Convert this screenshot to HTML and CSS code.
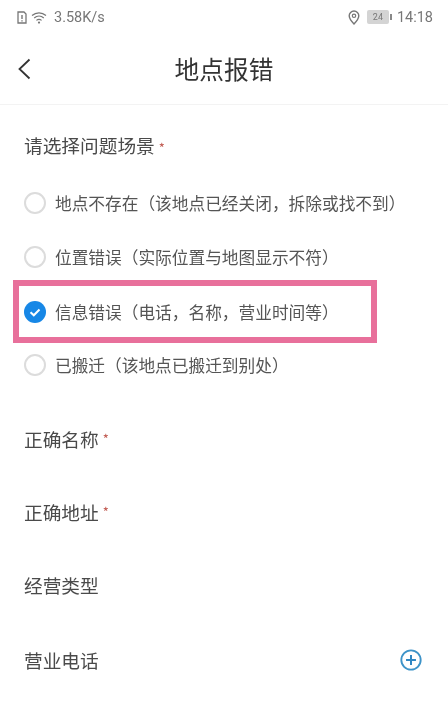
FILE: index.html
```html
<!DOCTYPE html>
<html lang="zh-CN">
<head>
<meta charset="utf-8">
<title>地点报错</title>
<link rel="stylesheet" href="styles.css">
</head>
<body>
<div class="screen">
  <div class="status">
    <div class="status-side">
      <svg class="sim" viewBox="0 0 10 13" width="10" height="13"><path d="M1 1h6l2 2v9H1z" fill="none" stroke="#777" stroke-width="1.300"/><path d="M5 4v4M5 9.300v1.200" stroke="#777" stroke-width="1.400"/></svg>
      <svg class="wifi" viewBox="0 0 16 13" width="16" height="13"><path d="M1 4.500c4-3.600 10-3.600 14 0M3.200 7c2.800-2.400 6.800-2.400 9.600 0M5.400 9.400c1.500-1.200 3.700-1.200 5.200 0" fill="none" stroke="#777" stroke-width="1.200"/><circle cx="8" cy="11.600" r="1.100" fill="#777"/></svg>
      <span class="speed">3.58K/s</span>
    </div>
    <div class="status-side">
      <svg class="pin" viewBox="0 0 12 15" width="12" height="15"><path d="M6 1a4.800 4.800 0 0 0-4.800 4.800C1.200 9 6 14 6 14s4.800-5 4.800-8.200A4.800 4.800 0 0 0 6 1z" fill="none" stroke="#777" stroke-width="1.400"/><circle cx="6" cy="5.800" r="1.700" fill="none" stroke="#777" stroke-width="1.200"/></svg>
      <div class="battery"><span class="battery-body">24</span><span class="battery-tip"></span></div>
      <span class="clock">14:18</span>
    </div>
  </div>
  <header class="nav">
    <svg class="back" viewBox="0 0 14 22" width="14" height="22"><path d="M12.500 1.500 2.500 11 12.500 20.500" fill="none" stroke="#333" stroke-width="1.800"/></svg>
    <h1 class="title">地点报错</h1>
  </header>
  <main class="form">
    <div class="question">请选择问题场景<span class="star">*</span></div>
    <div class="options">
      <div class="option"><span class="radio"></span><span>地点不存在（该地点已经关闭，拆除或找不到）</span></div>
      <div class="option"><span class="radio"></span><span>位置错误（实际位置与地图显示不符）</span></div>
      <div class="option selected">
        <svg class="check" viewBox="0 0 22 22" width="22" height="22"><circle cx="11" cy="11" r="11" fill="#1787e6"/><path d="M6.500 11.200 9.800 14.300 15.500 8.500" fill="none" stroke="#fff" stroke-width="2"/></svg>
        <span>信息错误（电话，名称，营业时间等）</span>
      </div>
      <div class="option"><span class="radio"></span><span>已搬迁（该地点已搬迁到别处）</span></div>
    </div>
    <div class="field first">正确名称<span class="star">*</span></div>
    <div class="field">正确地址<span class="star">*</span></div>
    <div class="field">经营类型</div>
    <div class="field phone">
      <span>营业电话</span>
      <svg class="plus" viewBox="0 0 20 20" width="22" height="22"><circle cx="10" cy="10" r="8.800" fill="none" stroke="#3d93c8" stroke-width="1.700"/><path d="M10 5.500v9M5.500 10h9" stroke="#2f86c2" stroke-width="1.800"/></svg>
    </div>
  </main>
</div>
</body>
</html>
```
FILE: styles.css
```css
html, body { margin: 0; padding: 0; background: #fff; }
.screen {
  width: 448px;
  height: 720px;
  overflow: hidden;
  display: flex;
  flex-direction: column;
  font-family: "Noto Sans CJK SC", "Liberation Sans", sans-serif;
  color: #4a4a4a;
  filter: blur(0.45px);
}
.status {
  height: 34px;
  padding: 0 15px 0 17px;
  display: flex;
  align-items: center;
  justify-content: space-between;
  font-family: "Roboto", "Liberation Sans", sans-serif;
  font-size: 14.500px;
  color: #777;
}
.status-side { display: flex; align-items: center; gap: 4px; }
.speed { margin-left: 3px; }
.battery { display: flex; align-items: center; margin: 0 1px 0 3px; }
.battery-body {
  width: 22px;
  height: 14px;
  background: #d4d4d4;
  border-radius: 2px;
  font-size: 9px;
  line-height: 14px;
  text-align: center;
  color: #777;
}
.battery-tip { width: 2px; height: 6px; background: #888; margin-left: 1px; }
.nav {
  height: 71px;
  position: relative;
  display: flex;
  align-items: center;
  justify-content: center;
  border-bottom: 1px solid #f3f3f3;
  box-sizing: border-box;
}
.back { position: absolute; left: 17px; top: 24px; }
.title { margin: 0 0 2px; font-size: 24.700px; font-weight: 400; color: #333; }
.form { padding: 0 25px; display: flex; flex-direction: column; }
.question { margin-top: 27px; font-size: 18.700px; line-height: 26px; margin-left: -1px; }
.star { color: #c0584f; font-size: 13px; margin-left: 4px; }
.options { margin-top: 15px; display: flex; flex-direction: column; }
.option {
  height: 54px;
  display: flex;
  align-items: center;
  gap: 9px;
  font-size: 16.700px;
  color: #555;
  white-space: nowrap;
  margin-left: -1px;
}
.radio {
  width: 18px;
  height: 18px;
  border: 2px solid #dcdcdc;
  border-radius: 50%;
  flex: none;
}
.option.selected {
  height: 63px;
  margin: -4px -1px -5px -12px;
  width: 364px;
  box-sizing: border-box;
  border: 6px solid #e8709b;
  padding-left: 5px;
}
.check { flex: none; }
.field {
  height: 73px;
  display: flex;
  align-items: center;
  font-size: 18.700px;
  margin-left: -1px;
}
.field.first { margin-top: 10px; }
.phone { justify-content: space-between; padding-right: 1px; margin-top: 2px; }
```
